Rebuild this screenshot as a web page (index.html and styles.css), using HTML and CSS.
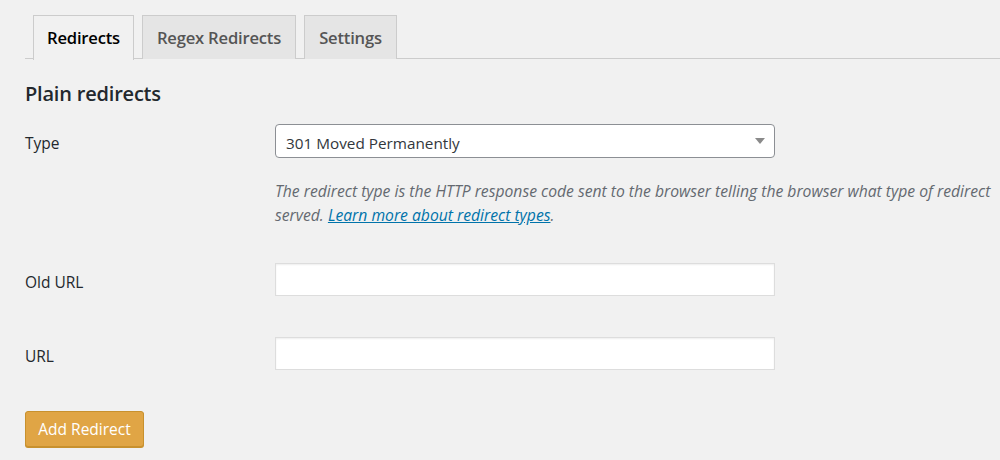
FILE: index.html
```html
<!DOCTYPE html>
<html>
<head>
<meta charset="utf-8">
<link rel="stylesheet" href="styles.css">
</head>
<body>
<div class="wrap">
  <nav class="tabs">
    <a class="tab active">Redirects</a>
    <a class="tab">Regex Redirects</a>
    <a class="tab">Settings</a>
  </nav>
  <h2 class="title">Plain redirects</h2>
  <div class="row row-type">
    <div class="label">Type</div>
    <div class="field">
      <div class="select">
        <span class="select-text">301 Moved Permanently</span>
        <span class="arrow"></span>
      </div>
      <p class="desc">The redirect type is the HTTP response code sent to the browser telling the browser what type of redirect<br>served. <a class="link">Learn more about redirect types</a>.</p>
    </div>
  </div>
  <div class="row row-old">
    <div class="label">Old URL</div>
    <div class="field"><input class="input" type="text"></div>
  </div>
  <div class="row row-url">
    <div class="label">URL</div>
    <div class="field"><input class="input" type="text"></div>
  </div>
  <button class="button">Add Redirect</button>
</div>
</body>
</html>
```
FILE: styles.css
```css
html, body {
  margin: 0;
  padding: 0;
  background: #f1f1f1;
  overflow: hidden;
}
body {
  font-family: "Open Sans", "Noto Sans", sans-serif;
  color: #23282d;
  font-size: 15.5px;
  width: 1000px;
  height: 460px;
}
.wrap {
  padding: 15px 0 0 25px;
}
.tabs {
  display: flex;
  gap: 8px;
  padding-left: 8px;
  border-bottom: 1px solid #ccc;
  height: 44px;
  box-sizing: border-box;
}
.tab {
  display: flex;
  align-items: center;
  justify-content: center;
  height: 44px;
  box-sizing: border-box;
  border: 1px solid #ccc;
  border-bottom: none;
  background: #e5e5e5;
  color: #555;
  font-size: 16.6px;
  font-weight: 600;
  letter-spacing: -0.2px;
  padding-bottom: 1px;
}
.tab.active {
  background: #f1f1f1;
  color: #000;
  height: 45px;
  margin-bottom: -1px;
  width: 101px;
  padding-bottom: 2px;
}
.tab:nth-child(2) { width: 154px; }
.tab:nth-child(3) { width: 93px; }
.title {
  margin: 22px 0 0;
  font-size: 20px;
  font-weight: 600;
  line-height: 26px;
  letter-spacing: -0.2px;
}
.row {
  display: flex;
}
.label {
  width: 250px;
  flex: none;
}
.row-type {
  margin-top: 17px;
}
.row-type .label {
  height: 34px;
  line-height: 38px;
}
.select {
  width: 500px;
  height: 34px;
  box-sizing: border-box;
  border: 1px solid #8c8f94;
  border-radius: 4px;
  background: #fff;
  display: flex;
  align-items: center;
  justify-content: space-between;
  padding: 0 9px 0 10px;
  font-size: 15.3px;
  color: #32373c;
}
.select-text {
  padding-top: 3px;
}
.arrow {
  width: 0;
  height: 0;
  border-left: 5px solid transparent;
  border-right: 5px solid transparent;
  border-top: 6px solid #8a8a8a;
  margin-top: -1px;
}
.desc {
  margin: 21px 0 0;
  font-style: italic;
  color: #646970;
  font-size: 15.7px;
  line-height: 24px;
  white-space: nowrap;
}
.link {
  color: #0073aa;
  text-decoration: underline;
}
.row-old {
  margin-top: 36px;
}
.row-url {
  margin-top: 41px;
}
.row-old .label, .row-url .label {
  height: 33px;
  line-height: 38px;
}
.input {
  display: block;
  width: 500px;
  height: 33px;
  box-sizing: border-box;
  border: 1px solid #ddd;
  background: #fff;
  box-shadow: inset 0 1px 2px rgba(0,0,0,0.07);
  margin: 0;
}
.button {
  display: block;
  margin-top: 41px;
  height: 36px;
  width: 119px;
  background: #e0a545;
  border: 1px solid #c8912e;
  border-radius: 3px;
  color: #fff;
  font-family: inherit;
  font-size: 15.5px;
  padding: 0;
  box-shadow: 0 1px 0 #c8912e;
}
```
